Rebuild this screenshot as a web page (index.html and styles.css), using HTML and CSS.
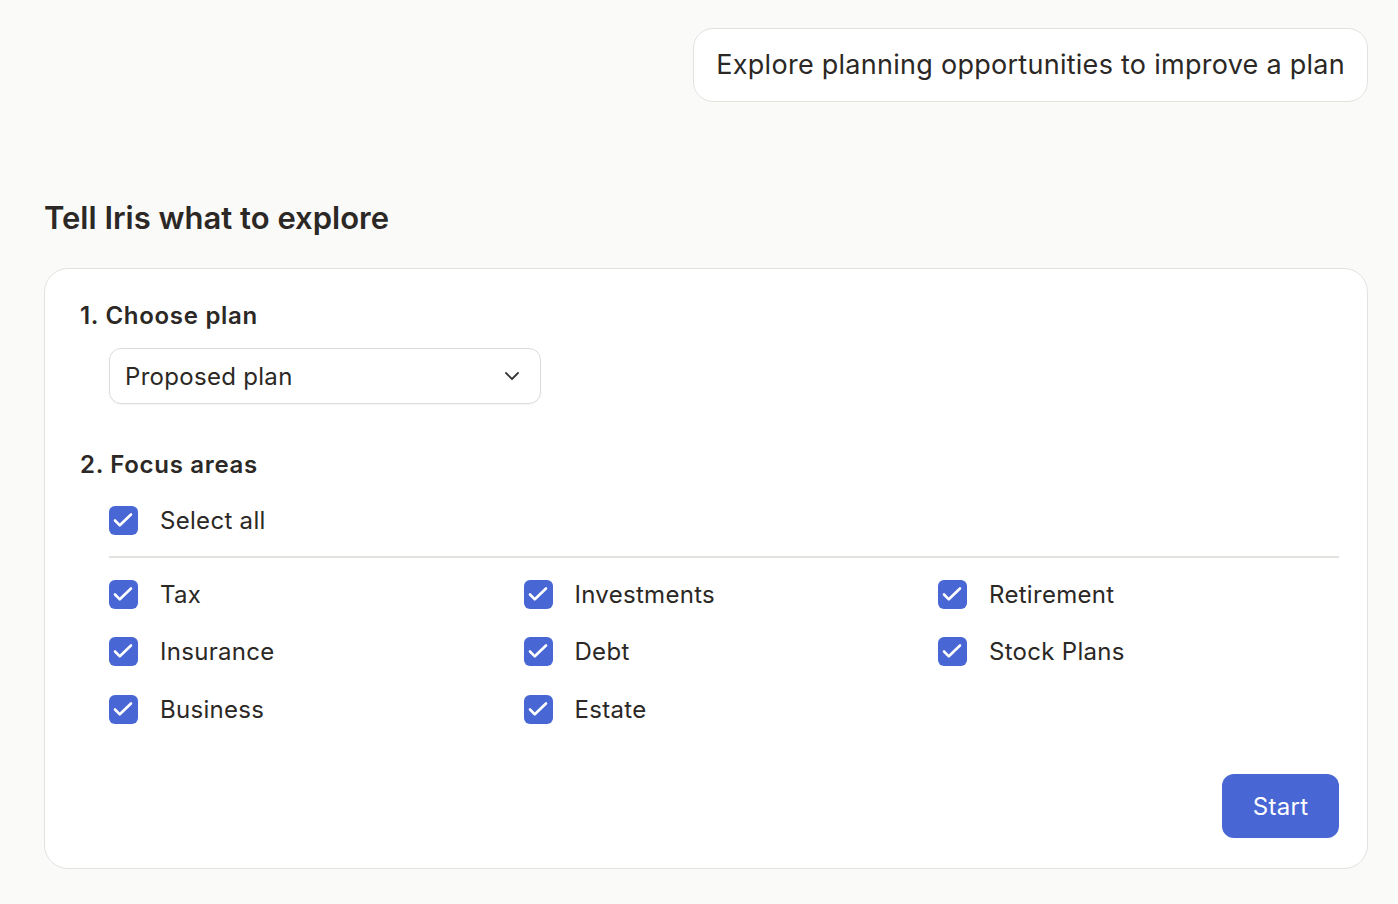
FILE: index.html
```html
<!DOCTYPE html>
<html lang="en">
<head>
    <meta charset="UTF-8">
    <meta name="viewport" content="width=device-width, initial-scale=1.0">
    <title>Tell Iris what to explore</title>
    <link rel="stylesheet" href="styles.css">
</head>
<body>

<div class="chat">
    <div class="bubble">Explore planning opportunities to improve a plan</div>
</div>

<h2 class="title">Tell Iris what to explore</h2>

<form class="card">
    <div class="step">1. Choose plan</div>
    <div class="select">
        <span>Proposed plan</span>
        <svg class="chevron" width="20" height="20" viewBox="0 0 20 20">
            <path d="M4 7l6 6 6-6" fill="none" stroke="#3a3734" stroke-width="1.8" stroke-linecap="round" stroke-linejoin="round"/>
        </svg>
    </div>

    <div class="step step-focus">2. Focus areas</div>
    <label class="check check-all">
        <span class="box"><svg viewBox="0 0 29 29"><path d="M6 14.5l4.8 4.8L22 8.5" /></svg></span>
        Select all
    </label>
    <div class="divider"></div>

    <div class="areas">
        <label class="check"><span class="box"><svg viewBox="0 0 29 29"><path d="M6 14.5l4.8 4.8L22 8.5" /></svg></span>Tax</label>
        <label class="check"><span class="box"><svg viewBox="0 0 29 29"><path d="M6 14.5l4.8 4.8L22 8.5" /></svg></span>Investments</label>
        <label class="check"><span class="box"><svg viewBox="0 0 29 29"><path d="M6 14.5l4.8 4.8L22 8.5" /></svg></span>Retirement</label>
        <label class="check"><span class="box"><svg viewBox="0 0 29 29"><path d="M6 14.5l4.8 4.8L22 8.5" /></svg></span>Insurance</label>
        <label class="check"><span class="box"><svg viewBox="0 0 29 29"><path d="M6 14.5l4.8 4.8L22 8.5" /></svg></span>Debt</label>
        <label class="check"><span class="box"><svg viewBox="0 0 29 29"><path d="M6 14.5l4.8 4.8L22 8.5" /></svg></span>Stock Plans</label>
        <label class="check"><span class="box"><svg viewBox="0 0 29 29"><path d="M6 14.5l4.8 4.8L22 8.5" /></svg></span>Business</label>
        <label class="check"><span class="box"><svg viewBox="0 0 29 29"><path d="M6 14.5l4.8 4.8L22 8.5" /></svg></span>Estate</label>
    </div>

    <div class="actions">
        <button type="button" class="start">Start</button>
    </div>
</form>

</body>
</html>
```

FILE: styles.css
```css
body {
    margin: 0;
    padding: 28px 30px 36px 44px;
    background-color: #fafaf9;
    font-family: Inter, "Noto Sans", sans-serif;
    color: #2b2825;
}
.chat {
    display: flex;
    justify-content: flex-end;
}
.bubble {
    padding: 0 22px;
    height: 72px;
    line-height: 72px;
    background-color: #fff;
    border: 1px solid #e3e2df;
    border-radius: 20px;
    font-size: 27px;
    letter-spacing: 0.27px;
}
.title {
    margin: 96px 0 0 0;
    font-size: 31px;
    font-weight: 600;
    line-height: 40px;
}
.card {
    margin-top: 30px;
    padding: 30px 28px 30px 35px;
    background-color: #fff;
    border: 1px solid #e3e2df;
    border-radius: 24px;
}
.step {
    font-size: 24px;
    font-weight: 600;
    line-height: 34px;
    letter-spacing: 0.7px;
}
.select {
    display: flex;
    align-items: center;
    justify-content: space-between;
    width: 432px;
    height: 56px;
    margin: 15px 0 0 29px;
    padding: 0 18px 0 15px;
    box-sizing: border-box;
    border: 1px solid #dcdbd8;
    border-radius: 12px;
    font-size: 24px;
    letter-spacing: 0.3px;
    box-shadow: 0 1px 2px rgba(0, 0, 0, 0.04);
}
.step-focus {
    margin-top: 44px;
}
.check {
    display: flex;
    align-items: center;
    gap: 22px;
    height: 40px;
    font-size: 24px;
    letter-spacing: 0.3px;
}
.box {
    flex: none;
    width: 29px;
    height: 29px;
    border-radius: 6px;
    background-color: #4866d4;
}
.box svg {
    display: block;
    width: 29px;
    height: 29px;
    fill: none;
    stroke: #fff;
    stroke-width: 2.6;
    stroke-linecap: round;
    stroke-linejoin: round;
}
.check-all {
    margin: 18px 0 0 29px;
}
.divider {
    height: 2px;
    margin: 16px 0 0 29px;
    background-color: #e3e2df;
}
.areas {
    display: grid;
    grid-template-columns: repeat(3, 414.5px);
    row-gap: 17.5px;
    margin: 16px 0 0 29px;
}
.actions {
    display: flex;
    justify-content: flex-end;
    margin-top: 45px;
}
.start {
    width: 117px;
    height: 64px;
    border: none;
    border-radius: 12px;
    background-color: #4866d4;
    color: #fff;
    font-family: Inter, "Noto Sans", sans-serif;
    font-size: 24px;
    letter-spacing: 0.3px;
}
```
